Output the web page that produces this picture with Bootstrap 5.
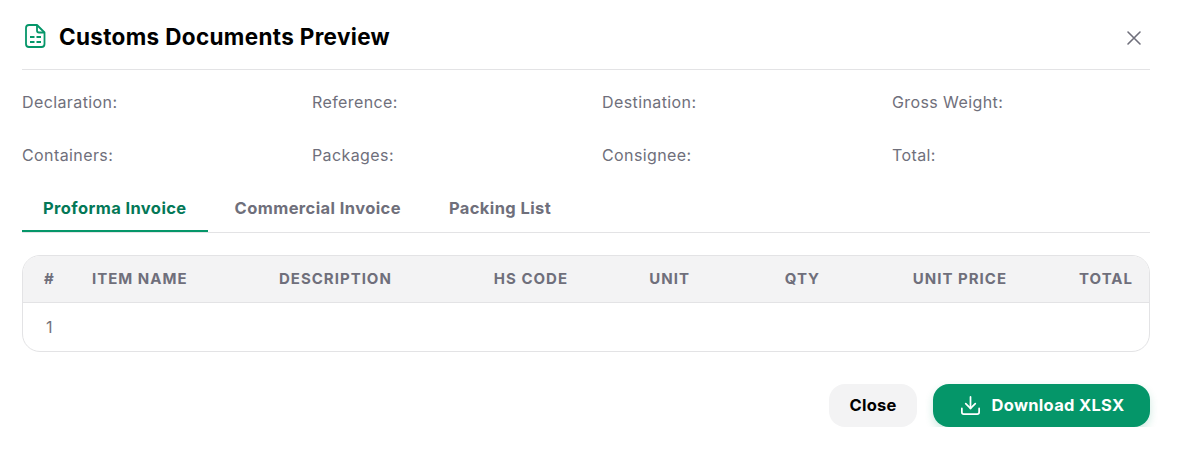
<!DOCTYPE html>
<html lang="en">
<head>
<meta charset="utf-8">
<title>Customs Documents Preview</title>
<link href="https://cdn.jsdelivr.net/npm/bootstrap@5.3.0/dist/css/bootstrap.min.css" rel="stylesheet">
<style>
body{background:#fff;font-family:"Inter","Liberation Sans",sans-serif;color:#000;}
.sheet{width:1128px;margin-left:22px;}
.dlg-head{height:70px;padding-top:3px;border-bottom:1px solid #e3e3e5;}
.dlg-icon{margin-right:11px;flex:none;}
.dlg-title{font-size:22.5px;font-weight:700;letter-spacing:.33px;margin:0;color:#000;line-height:28px;padding-top:1px;}
.dlg-x{background:none;border:0;padding:0;width:16px;height:16px;margin-right:8px;margin-top:3px;display:flex;}
.facts{--bs-gutter-x:32px;--bs-gutter-y:0;}
.facts>div{height:53px;font-size:16px;letter-spacing:.4px;color:#6f6f7b;line-height:24px;font-weight:400;}
.facts-wrap{padding-top:20px;}
.tabbar{--bs-nav-tabs-border-width:0;border-bottom:1px solid #e3e3e5;height:47px;margin-top:-10px;gap:6px;}
.tabbar .nav-link{border:0;border-bottom:2px solid transparent;background:none;color:#6f6f7b;font-size:16.5px;letter-spacing:.4px;font-weight:700;padding:0 21px;height:46px;line-height:44px;margin:0;border-radius:0;}
.tabbar .nav-link.active{color:#047857;border-bottom-color:#059669;background:none;}
.tbl-box{margin-top:22px;border:1px solid #e3e3e5;border-radius:18px;overflow:hidden;height:97px;}
.doc-table{table-layout:fixed;width:1126px;margin:0;}
.doc-table th{background:#f3f3f4;color:#6f6f7b;font-size:15px;font-weight:700;letter-spacing:1px;text-transform:uppercase;padding:0 16px;height:46px;line-height:44px;border-bottom:1px solid #e3e3e5;vertical-align:middle;box-shadow:none;white-space:nowrap;}
.doc-table td{height:49px;padding:0 16px;border:0;color:#72727a;font-size:16px;font-weight:400;line-height:46px;vertical-align:middle;}
.doc-table th:first-child{padding-left:21px;}
.doc-table td:first-child{padding-left:23px;}
.c1{width:53px}.c2{width:187px}.c3{width:187px}.c4{width:134px}.c5{width:122px}.c6{width:130px}.c7{width:187px}.c8{width:126px}
.acts{margin-top:32px;gap:16px;}
.btn-shut{background:#f3f3f4;color:#000;border:0;border-radius:16px;height:43px;width:88px;font-size:16.5px;letter-spacing:.2px;font-weight:700;padding:0;}
.btn-shut:hover{background:#e9e9eb;color:#000;}
.btn-xlsx{background:#059669;color:#fff;border:0;border-radius:16px;height:43px;width:217px;font-size:16.5px;letter-spacing:.3px;font-weight:700;padding:0;gap:10px;box-shadow:0 4px 8px rgba(5,150,105,.2);}
.btn-xlsx:hover{background:#047857;color:#fff;}
</style>
</head>
<body>
<div class="sheet">
  <div class="dlg-head d-flex align-items-center justify-content-between">
    <div class="d-flex align-items-center">
      <svg class="dlg-icon" width="26" height="26" viewBox="0 0 26 26" fill="none" stroke="#059669" stroke-width="1.8" stroke-linejoin="round" aria-hidden="true"><path d="M15 2H7a3 3 0 0 0-3 3v16a3 3 0 0 0 3 3h12.5a3 3 0 0 0 3-3V9.5z"/><path d="M15 2v5.5a2 2 0 0 0 2 2h5.5"/><path stroke-width="2" d="M8 14h4.5M14.5 14H19M8 19h4.5M14.5 19H19"/></svg>
      <h1 class="dlg-title">Customs Documents Preview</h1>
    </div>
    <button class="dlg-x" type="button" aria-label="Close"><svg width="16" height="16" viewBox="0 0 16 16" fill="none" stroke="#6f6f7b" stroke-width="1.6" stroke-linecap="round"><path d="M2 2l12 12M14 2L2 14"/></svg></button>
  </div>
  <div class="facts-wrap">
    <div class="row facts">
      <div class="col-3">Declaration:</div><div class="col-3">Reference:</div><div class="col-3">Destination:</div><div class="col-3">Gross Weight:</div>
      <div class="col-3">Containers:</div><div class="col-3">Packages:</div><div class="col-3">Consignee:</div><div class="col-3">Total:</div>
    </div>
  </div>
  <ul class="nav nav-tabs tabbar">
    <li class="nav-item"><a class="nav-link active" href="#">Proforma Invoice</a></li>
    <li class="nav-item"><a class="nav-link" href="#">Commercial Invoice</a></li>
    <li class="nav-item"><a class="nav-link" href="#">Packing List</a></li>
  </ul>
  <div class="tbl-box">
    <table class="table doc-table">
      <thead><tr>
        <th class="c1">#</th><th class="c2">Item Name</th><th class="c3">Description</th><th class="c4 text-end">HS Code</th><th class="c5 text-end">Unit</th><th class="c6 text-end">QTY</th><th class="c7 text-end">Unit Price</th><th class="c8 text-end">Total</th>
      </tr></thead>
      <tbody><tr><td>1</td><td></td><td></td><td></td><td></td><td></td><td></td><td></td></tr></tbody>
    </table>
  </div>
  <div class="acts d-flex justify-content-end">
    <button class="btn btn-shut" type="button">Close</button>
    <button class="btn btn-xlsx d-flex align-items-center justify-content-center" type="button">
      <svg width="23" height="23" viewBox="0 0 24 24" fill="none" stroke="#fff" stroke-width="1.8" stroke-linecap="round" stroke-linejoin="round" aria-hidden="true"><path d="M3 15v4a2 2 0 0 0 2 2h14a2 2 0 0 0 2-2v-4"/><path d="M7 10l5 5 5-5"/><path d="M12 15V3"/></svg>
      Download XLSX
    </button>
  </div>
</div>
</body>
</html>
